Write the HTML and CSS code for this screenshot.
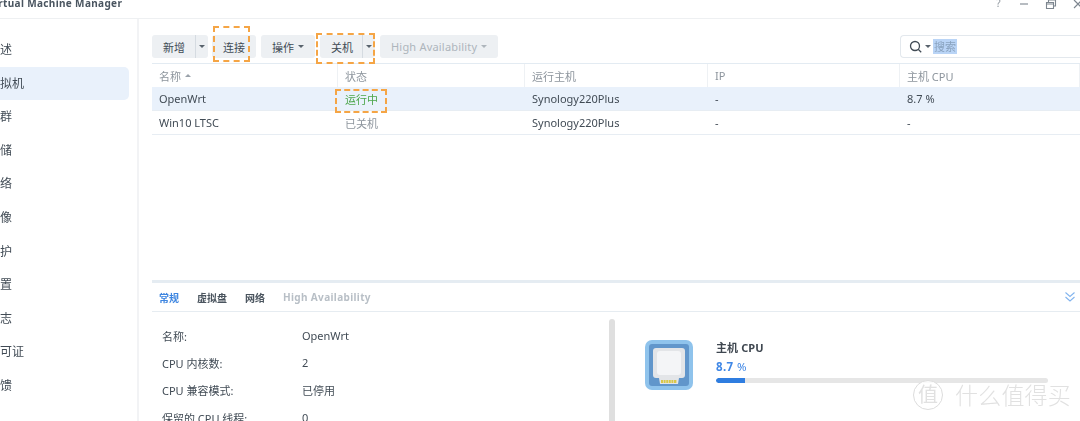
FILE: index.html
```html
<!DOCTYPE html>
<html lang="zh">
<head>
<meta charset="utf-8">
<title>Virtual Machine Manager</title>
<link rel="stylesheet" href="styles.css">
</head>
<body>
<div class="window">
  <header class="titlebar">
    <span class="app-title">Virtual Machine Manager</span>
    <div class="win-controls">
      <span class="win-help">?</span>
      <svg class="win-icon" viewBox="0 0 12 12"><path d="M2 6h8" /></svg>
      <svg class="win-icon" viewBox="0 0 12 12"><path d="M1.500 4.500h7v6h-7zM1.500 6h7M3.500 4.500V2h7v6H8.500" /></svg>
      <svg class="win-icon" viewBox="0 0 12 12"><path d="M2 2l8 8M10 2l-8 8" /></svg>
    </div>
  </header>
  <div class="body">
    <nav class="sidebar">
      <div class="nav-item">概述</div>
      <div class="nav-item active">虚拟机</div>
      <div class="nav-item">集群</div>
      <div class="nav-item">存储</div>
      <div class="nav-item">网络</div>
      <div class="nav-item">映像</div>
      <div class="nav-item">保护</div>
      <div class="nav-item">设置</div>
      <div class="nav-item">日志</div>
      <div class="nav-item">许可证</div>
      <div class="nav-item">反馈</div>
    </nav>
    <main class="main">
      <div class="toolbar">
        <div class="btn btn-add"><span class="btn-label">新增</span><span class="split"><i class="caret"></i></span></div>
        <div class="btn btn-connect"><span class="btn-label">连接</span><i class="mark mark-connect"></i></div>
        <div class="btn btn-action"><span class="btn-label">操作</span><i class="caret"></i></div>
        <div class="btn btn-off"><span class="btn-label">关机</span><span class="split"><i class="caret"></i></span><i class="mark mark-off"></i></div>
        <div class="btn btn-ha"><span class="btn-label">High Availability</span><i class="caret"></i></div>
        <div class="search">
          <svg class="search-icon" viewBox="0 0 14 14"><circle cx="6" cy="6" r="4.500" /><path d="M9.200 9.200l3 3" /></svg>
          <i class="caret dark"></i>
          <span class="search-text">搜索</span>
        </div>
      </div>
      <div class="grid head">
        <div class="cell">名称<i class="caret up"></i></div>
        <div class="cell">状态</div>
        <div class="cell">运行主机</div>
        <div class="cell">IP</div>
        <div class="cell">主机 CPU</div>
      </div>
      <div class="grid row selected">
        <div class="cell">OpenWrt</div>
        <div class="cell running">运行中<i class="mark mark-status"></i></div>
        <div class="cell">Synology220Plus</div>
        <div class="cell">-</div>
        <div class="cell">8.7 %</div>
      </div>
      <div class="grid row">
        <div class="cell">Win10 LTSC</div>
        <div class="cell stopped">已关机</div>
        <div class="cell">Synology220Plus</div>
        <div class="cell">-</div>
        <div class="cell">-</div>
      </div>
      <div class="spacer"></div>
      <section class="detail">
        <div class="tabs">
          <span class="tab current">常规</span>
          <span class="tab">虚拟盘</span>
          <span class="tab">网络</span>
          <span class="tab off">High Availability</span>
          <svg class="collapse" viewBox="0 0 12 12"><path d="M1.500 1.500l4.500 4 4.500-4M1.500 6l4.500 4 4.500-4" /></svg>
        </div>
        <div class="detail-body">
          <dl class="facts">
            <dt>名称:</dt><dd>OpenWrt</dd>
            <dt>CPU 内核数:</dt><dd>2</dd>
            <dt>CPU 兼容模式:</dt><dd>已停用</dd>
            <dt>保留的 CPU 线程:</dt><dd>0</dd>
          </dl>
          <div class="scrollbar"></div>
          <div class="usage">
            <svg class="chip" viewBox="0 0 48 50">
              <rect width="48" height="50" rx="7" fill="#8fc3ec" />
              <rect x="4" y="4" width="40" height="42" rx="3" fill="#6196cb" />
              <path d="M8 11a3 3 0 0 1 3-3h26a3 3 0 0 1 3 3v24a3 3 0 0 1-3 3h-3l-1 6H15l-1-6h-3a3 3 0 0 1-3-3z" fill="#e3e5e8" />
              <rect x="12" y="11" width="24" height="24" rx="3" fill="#f4f5f7" />
              <path d="M16 41.500h16" stroke="#d9c84a" stroke-width="3" stroke-dasharray="2 .6" fill="none" />
            </svg>
            <div class="usage-info">
              <div class="usage-title">主机 CPU</div>
              <div class="usage-value"><b>8.7</b> %</div>
              <div class="bar"><div class="bar-fill"></div></div>
            </div>
          </div>
        </div>
      </section>
    </main>
  </div>
</div>
<div class="watermark"><span class="wm-circle">值</span><span class="wm-text">什么值得买</span></div>
</body>
</html>
```
FILE: styles.css
```css
* { box-sizing: border-box; }
html, body { margin: 0; height: 100%; overflow: hidden; background: #fff; }
body {
  position: relative;
  font-family: "Noto Sans", "Noto Sans CJK SC", sans-serif;
  font-size: 11px;
  color: #414b55;
}
.window { width: 1104px; height: 421px; margin-left: -24px; display: flex; flex-direction: column; filter: blur(.4px); }

.titlebar { height: 19px; flex: none; display: flex; justify-content: space-between; border-bottom: 1px solid #eef0f2; }
.app-title { font-weight: 700; font-size: 10px; letter-spacing: .35px; line-height: 8px; margin-left: 12px; margin-top: -1px; color: #4a5560; }
.win-controls { display: flex; align-items: flex-start; gap: 15px; width: 90px; margin-top: -2px; margin-right: -4px; flex: none; }
.win-help { font-size: 10px; line-height: 10px; color: #8a929a; width: 12px; text-align: center; }
.win-icon { width: 12px; height: 12px; flex: none; fill: none; stroke: #7d868f; stroke-width: 1.1; }

.body { flex: 1; display: flex; min-height: 0; }
.sidebar { width: 163px; flex: none; padding-top: 14px; padding-right: 8px; border-right: 2px solid #f2f3f5; display: flex; flex-direction: column; gap: .6px; }
.nav-item { height: 33px; line-height: 33px; padding-left: 12px; font-size: 12px; border-radius: 0 5px 5px 0; color: #414b55; }
.nav-item.active { background: #e9f1fb; }

.main { flex: 1; min-width: 0; padding-left: 13px; display: flex; flex-direction: column; }
.toolbar { display: flex; gap: 5px; height: 45px; padding-top: 16px; flex: none; border-bottom: 1px solid #e3ebf2; }
.btn { position: relative; flex: none; height: 23px; background: #edf0f3; border-radius: 3px; display: flex; align-items: center; font-size: 11px; color: #414b55; white-space: nowrap; }
.btn-label { padding-left: 11px; }
.btn-add { width: 56px; }
.btn-connect { width: 44px; margin-left: -1px; }
.btn-action { width: 54px; }
.btn-off { width: 55px; }
.btn-ha { width: 118px; color: #aeb5bc; letter-spacing: .2px; }
.btn-action .caret, .btn-ha .caret { margin-left: 4px; }
.split { margin-left: auto; width: 13px; height: 100%; border-left: 1px solid #d5dbe1; display: flex; align-items: center; justify-content: center; }
.caret { display: inline-block; width: 0; height: 0; border-left: 3px solid transparent; border-right: 3px solid transparent; border-top: 3px solid #58626c; }
.btn-ha .caret { border-top-color: #aeb5bc; }
.caret.up { border-top: 0; border-bottom: 3px solid #9aa2aa; margin-left: 4px; }
.caret.dark { margin-left: 2px; flex: none; }

.search { margin-left: 397px; width: 180px; flex: none; height: 23px; border: 1px solid #e3e8ed; border-right: 0; border-radius: 4px 0 0 4px; display: flex; align-items: center; padding-left: 8px; }
.search-icon { width: 14px; height: 14px; flex: none; fill: none; stroke: #414b55; stroke-width: 1.3; }
.search-text { margin-left: 2px; background: #b9d4f6; color: #8aa3bf; height: 15px; line-height: 15px; padding: 0 1px; }

.mark { position: absolute; border: 2px dashed #f5a545; pointer-events: none; }
.mark-connect { left: 1px; top: -9px; width: 37px; height: 36px; }
.mark-off { left: -4px; top: -2px; width: 59px; height: 31px; }
.mark-status { left: -3px; top: 2px; width: 52px; height: 24px; }

.grid { display: grid; grid-template-columns: 186px 187px 183px 192px 1fr; flex: none; }
.head { height: 23px; color: #8d959d; }
.head .cell { border-right: 1px solid #eef1f4; }
.row { height: 24px; border-bottom: 1px solid #e7edf3; }
.row.selected { background: #e9f1fb; }
.cell { position: relative; padding-left: 7px; display: flex; align-items: center; white-space: nowrap; }
.running { color: #4da64a; }
.stopped { color: #8d959d; }

.spacer { flex: 1; }

.detail { height: 141px; flex: none; border-top: 3px solid #e5ecf2; display: flex; flex-direction: column; }
.tabs { height: 29px; flex: none; border-bottom: 1px solid #e6ecf1; display: flex; align-items: center; gap: 18px; padding-left: 7px; padding-right: 4px; font-weight: 700; font-size: 10px; color: #4a545e; }
.tab.current { color: #3d85e0; }
.tab.off { color: #b8bfc6; letter-spacing: .35px; }
.collapse { width: 12px; height: 12px; margin-left: auto; fill: none; stroke: #82b4ee; stroke-width: 1.1; }

.detail-body { flex: 1; min-height: 0; display: flex; }
.facts { margin: 10px 0 0; padding-left: 10px; width: 457px; flex: none; display: grid; grid-template-columns: 140px 1fr; grid-auto-rows: 27.3px; align-items: center; align-content: start; }
.facts dd { margin: 0; }
.scrollbar { width: 6px; margin-top: 7px; background: #dfdfdf; border-radius: 3px 3px 0 0; flex: none; }
.usage { margin-left: 30px; padding-top: 28px; display: flex; align-items: flex-start; gap: 23px; }
.chip { width: 48px; height: 50px; flex: none; }
.usage-title { font-weight: 700; font-size: 11px; line-height: 14px; margin-top: 1px; color: #3f4750; letter-spacing: .1px; }
.usage-value { font-size: 11.5px; line-height: 14px; margin-top: 5px; color: #3f87e6; letter-spacing: .4px; }
.bar { width: 332px; height: 5px; margin-top: 4px; background: #e6e6e6; border-radius: 3px; overflow: hidden; }
.bar-fill { width: 29px; height: 100%; background: #2f7de0; border-radius: 3px 0 0 3px; }

.watermark { position: absolute; left: 913px; top: 380px; display: flex; align-items: center; gap: 12px; color: #e1e1e1; filter: blur(.35px); }
.wm-circle { width: 30px; height: 30px; border: 1px solid #dcdcdc; border-radius: 50%; background: rgba(255,255,255,.8); font-size: 20px; line-height: 27px; text-align: center; }
.wm-text { font-size: 23px; line-height: 26px; font-weight: 300; letter-spacing: .2px; }
```
